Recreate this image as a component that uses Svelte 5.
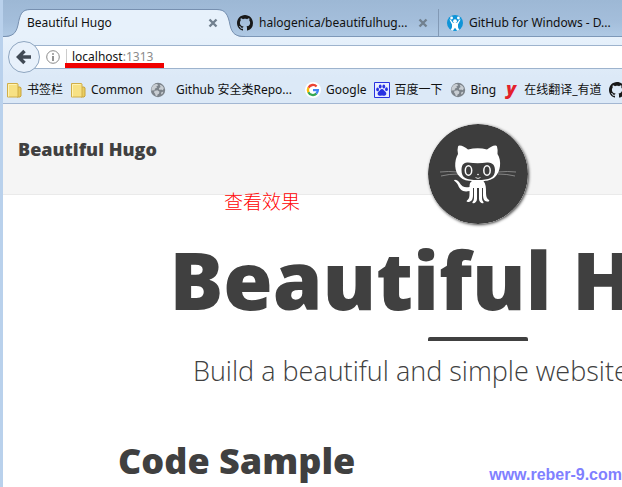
<script>
  const bookmarks = [
    { icon: 'folder', label: '书签栏' },
    { icon: 'folder', label: 'Common' },
    { icon: 'globe', label: 'Github 安全类Repo...', wide: true },
    { icon: 'google', label: 'Google' },
    { icon: 'baidu', label: '百度一下' },
    { icon: 'globe', label: 'Bing' },
    { icon: 'youdao', label: '在线翻译_有道' },
    { icon: 'github', label: '' }
  ];
  const tabs = [
    { icon: 'github', label: 'halogenica/beautifulhug...' },
    { icon: 'people', label: 'GitHub for Windows - D...' }
  ];
</script>

{#snippet icon(name)}
  {#if name === 'folder'}
    <svg class="icon" viewBox="0 0 16 16" aria-hidden="true">
      <path d="M11 5h3.2l.8 1v8l-1 1h-3z" fill="#e9cd60" stroke="#c9a43c" />
      <path d="M1.5 1.5h10l.5.5v13H1.5z" fill="#f7e184" stroke="#d0ae49" />
      <path d="M2.5 2.5h8M2.5 2.5v12" stroke="#fff3b5" fill="none" />
    </svg>
  {:else if name === 'globe'}
    <svg class="icon" viewBox="0 0 16 16" aria-hidden="true">
      <circle cx="8" cy="8" r="7.2" fill="#7c838a" />
      <path d="M2 5.2C3.2 3 5 1.8 7 2l1.3 1.2-2 1.2.7 1.4-2 .8-.5 2-1.8-.4L1.6 9C1.3 7.3 1.5 6.2 2 5.2zM9.5 2.5l2.8 1.2 1.6 2.3-1 2.2-1.8-.7-1.6.6-.6-1.9 1.700-1.100zM5 8.700l2.400-.5 2.100 1.600-.6 2-1.400.7-.3 1.700-1.600-.8L5 11.800 3.800 10zM11.500 10l1.800-.3-.8 2-1.600.9z" fill="#c9ced3" />
    </svg>
  {:else if name === 'google'}
    <svg class="icon" viewBox="0 0 16 16" aria-hidden="true">
      <circle cx="8" cy="8" r="8" fill="#fff" />
      <g fill="none" stroke-width="2.3">
        <path d="M3.5 5.7A5 5 0 0 1 11.6 4.5" stroke="#ea4335" />
        <path d="M3.5 5.6a5 5 0 0 0 0 4.8" stroke="#fbbc05" />
        <path d="M3.4 10.2a5 5 0 0 0 8 1.4" stroke="#34a853" />
        <path d="M8 8.1h4.9a5 5 0 0 1-1.6 3.6" stroke="#4285f4" />
      </g>
    </svg>
  {:else if name === 'baidu'}
    <svg class="icon" viewBox="0 0 16 16" aria-hidden="true">
      <path d="M.5.5h15v15H.5z" fill="#e9edff" stroke="#2932e1" />
      <g fill="#2932e1">
        <ellipse cx="3.6" cy="7.4" rx="1.4" ry="1.9" />
        <ellipse cx="6.2" cy="4.4" rx="1.4" ry="2" />
        <ellipse cx="9.8" cy="4.4" rx="1.4" ry="2" />
        <ellipse cx="12.5" cy="7.2" rx="1.4" ry="1.9" />
        <path d="M8 7c1.5 0 2 1.6 3.2 2.6 1.6 1.3 1.6 4-.8 4.1-1 0-1.5-.3-2.4-.3s-1.5.4-2.5.3c-2.3-.1-2.4-2.8-.8-4.1C6 8.600 6.400 7 8 7z" />
      </g>
    </svg>
  {:else if name === 'youdao'}
    <span class="icon youdao" aria-hidden="true">y</span>
  {:else if name === 'people'}
    <svg class="icon" viewBox="0 0 16 16" aria-hidden="true">
      <circle cx="8" cy="8" r="8" fill="#0e94d8" />
      <g fill="#fff">
        <circle cx="8" cy="6.200" r="1.900" />
        <circle cx="4.600" cy="3" r="1.400" />
        <circle cx="11.400" cy="3" r="1.400" />
        <path d="M2.400 4.600l1.200-.2 2.500 3.600h3.800l2.500-3.600 1.200.2L11 9.600v2.600l1.200 2.800-2 .7L8 12.700l-2.200 3-2-.7L5 12.200V9.600z" />
      </g>
    </svg>
  {:else}
    <svg class="icon" viewBox="0 0 16 16" aria-hidden="true">
      <path fill="#181818" d="M8 0C3.580 0 0 3.580 0 8c0 3.540 2.290 6.530 5.470 7.590.4.070.55-.17.55-.38 0-.19-.01-.82-.01-1.490-2.010.37-2.530-.49-2.690-.94-.09-.23-.48-.94-.82-1.130-.28-.15-.68-.52-.01-.53.63-.01 1.080.58 1.230.82.72 1.210 1.870.87 2.330.66.07-.52.28-.87.51-1.070-1.780-.2-3.640-.89-3.640-3.950 0-.87.31-1.590.82-2.150-.08-.2-.36-1.020.08-2.120 0 0 .67-.21 2.200.82.64-.18 1.320-.27 2-.27s1.360.09 2 .27c1.530-1.040 2.200-.82 2.200-.82.44 1.100.16 1.920.08 2.120.51.56.82 1.270.82 2.150 0 3.070-1.870 3.750-3.650 3.950.29.25.54.73.54 1.480 0 1.070-.01 1.930-.01 2.200 0 .21.15.46.55.38A8.010 8.010 0 0 0 16 8c0-4.420-3.580-8-8-8z" />
    </svg>
  {/if}
{/snippet}

{#snippet close()}
  <button class="close" aria-label="Close tab">
    <svg viewBox="0 0 10 10" aria-hidden="true"><path d="M1.500 1.500l7 7M8.500 1.500l-7 7" /></svg>
  </button>
{/snippet}

<div class="browser">
  <nav class="tabs" aria-label="Tabs">
    <div class="tab active">
      <svg class="shape" viewBox="0 0 242 29" aria-hidden="true">
        <path class="fill" d="M0 29V28C9 28 13 25 15 16C17 5 19 1 27 1H214C222 1 225 5 227 16C229 25 233 28 242 28V29z" />
        <path class="line" d="M0 27.500C9 27.500 13 25 15 16C17 5 19 .5 27 .5H214C222 .5 225 5 227 16C229 25 233 27.500 242 27.500" />
      </svg>
      <span class="title">Beautiful Hugo</span>
      {@render close()}
    </div>
    {#each tabs as tab}
      <div class="tab">
        {@render icon(tab.icon)}
        <span class="title">{tab.label}</span>
        {@render close()}
      </div>
    {/each}
  </nav>

  <div class="location">
    <button class="back" aria-label="Back">
      <svg viewBox="0 0 18 18" aria-hidden="true"><path d="M9.500 3L3.500 9l6 6M4 9h12" /></svg>
    </button>
    <div class="address">
      <svg class="info" viewBox="0 0 14 14" aria-hidden="true">
        <circle cx="7" cy="7" r="6.300" fill="none" stroke="#8b8b8b" />
        <path d="M7 6v5M7 3.200v1.600" stroke="#777" stroke-width="1.600" />
      </svg>
      <a class="url" href="http://localhost:1313">localhost<span>:1313</span></a>
    </div>
  </div>

  <nav class="bookmarks" aria-label="Bookmarks">
    {#each bookmarks as mark}
      <a href="#top" class:wide={mark.wide} aria-label={mark.label || 'GitHub'}>
        {@render icon(mark.icon)}
        {#if mark.label}<span>{mark.label}</span>{/if}
      </a>
    {/each}
  </nav>

  <div class="viewport">
    <div class="page" id="top">
      <header>
        <a class="brand" href="#top">Beautiful Hugo</a>
        <svg class="avatar" viewBox="0 0 100 100" role="img" aria-label="Octocat">
          <circle cx="50" cy="50" r="50" fill="#3d3d3d" />
          <path fill="none" stroke="#a5a5a5" stroke-width=".7" d="M12 48q8-1 18 0M13 52q8-2 17-2M88 48q-8-1-18 0M87 52q-8-2-17-2" />
          <path fill="#fff" d="M30 22.500C31 20 37 23 40 25.500Q50 23 59 25.500C63 22 68 20 69 22.500Q70 26 69.500 30C74 37 72.500 48 67 53C63 56.500 58 57 55.500 57C58 60 58 64 58 68C58 73 59 75 61 76C62 77 60.500 78 59 77.500C55.500 77 55 74 55 70V64H54V74C54 77 56 78 55.500 79C54 80 51 78 51 75V64H49V75C49 78 46 80 44.500 79C44 78 46 77 46 74V64H45V71C45 76 43 78 40 78C38.500 78 38 77 39.500 76C41 75 41.500 73 41.500 70V67C35 68.500 32 66 30 61C29 58.500 27 57.500 26 56.500C26 55 29 55.500 31 58C34 63 37 64 41.500 63C41.500 60 42 58 44 57C40 57 35 56 32 53C26 48 26 37 30 30Q29 26 30 22.500z" />
          <path fill="#3d3d3d" d="M40 38.500Q50 40 59 38.500C65 38 67 42 67 46C67 54 61 56 50 56C38 56 33.500 54 33.500 46C33.500 42 35 38 40 38.500z" />
          <g fill="#3d3d3d" stroke="#fff" stroke-width="1.500">
            <ellipse cx="40.500" cy="46.500" rx="3.200" ry="4.700" />
            <ellipse cx="59" cy="46.500" rx="3.200" ry="4.700" />
          </g>
          <circle cx="50" cy="50.500" r=".8" fill="#fff" />
          <path d="M47.500 53.500Q50 55.500 52.500 53.500" fill="none" stroke="#fff" stroke-width=".8" />
        </svg>
      </header>
      <main>
        <h1>Beautiful Hugo</h1>
        <hr />
        <p class="subtitle">Build a beautiful and simple website</p>
        <article><h2>Code Sample</h2></article>
      </main>
    </div>
  </div>

  <span class="underline"></span>
  <span class="note">查看效果</span>
  <span class="watermark">www.reber-9.com</span>
</div>

<style>
  :global(body) { margin: 0; }
  .browser {
    position: relative;
    display: flex;
    flex-direction: column;
    min-height: 100vh;
    box-sizing: border-box;
    border-left: 3px solid #b9d1ec;
    overflow: hidden;
    background: #fff;
    font: 12px/18px "Noto Sans", "Noto Sans CJK SC", sans-serif;
    color: #111;
  }
  a { color: inherit; text-decoration: none; }
  button { padding: 0; border: 0; background: none; }
  .icon { display: block; flex: none; width: 16px; height: 16px; }
  .tabs {
    display: flex;
    height: 37px;
    box-sizing: border-box;
    padding-top: 9px;
    background: linear-gradient(#9db8d5, #a4bedb 60%, #afc9e4);
    border-bottom: 1px solid #7d98b8;
  }
  .tab {
    position: relative;
    display: flex;
    align-items: center;
    flex: none;
    width: 210px;
    height: 28px;
    box-sizing: border-box;
    padding: 0 10px 0 8px;
    border-right: 1px solid #8299b5;
    white-space: nowrap;
  }
  .tab.active { width: 226px; padding: 0 11px 0 24px; border: 0; }
  .tab .icon { margin-right: 6px; }
  .title { position: relative; flex: 1; }
  .shape { position: absolute; left: 0; top: 0; width: 242px; height: 29px; }
  .fill { fill: #e7f1fb; }
  .line { fill: none; stroke: #7790b0; }
  .close { position: relative; width: 10px; height: 10px; }
  .close svg { display: block; }
  .close path { stroke: #71808f; stroke-width: 2.400; }
  .location {
    display: flex;
    align-items: center;
    height: 40px;
    padding-left: 5px;
    background: linear-gradient(#e7f1fb, #dce9f7);
  }
  .back {
    position: relative;
    flex: none;
    display: grid;
    place-items: center;
    width: 32px;
    height: 32px;
    box-sizing: border-box;
    border: 1px solid #8fa6c0;
    border-radius: 50%;
    background: #e8f1fb;
  }
  .back svg { width: 18px; height: 18px; }
  .back path { fill: none; stroke: #414a55; stroke-width: 3.500; }
  .address {
    display: flex;
    align-items: center;
    flex: 1;
    height: 24px;
    box-sizing: border-box;
    margin-left: -6px;
    padding-left: 12px;
    border: solid #9db3cd;
    border-width: 1px 0;
    background: #fff;
  }
  .info { width: 14px; height: 14px; }
  .url { margin-left: 6px; padding-left: 5px; border-left: 1px solid #ccc; line-height: 16px; }
  .url span { color: #8a8a8a; }
  .bookmarks {
    display: flex;
    align-items: center;
    gap: 7px;
    height: 27px;
    box-sizing: border-box;
    padding-left: 3px;
    border-bottom: 1px solid #a3b7d2;
    background: #dce9f7;
    white-space: nowrap;
  }
  .bookmarks a { display: flex; flex: none; align-items: center; gap: 5px; }
  .bookmarks .wide { gap: 10px; margin-right: 6px; }
  .youdao {
    color: #e3212b;
    font: italic 900 18px/12px "Open Sans", sans-serif;
    text-align: center;
  }
  .viewport { flex: 1; overflow: hidden; }
  .page { width: 950px; color: #404040; font-family: "Open Sans", sans-serif; }
  header {
    position: relative;
    display: flex;
    align-items: center;
    height: 91px;
    box-sizing: border-box;
    padding-left: 15px;
    border-bottom: 1px solid #eaeaea;
    background: #f5f5f5;
  }
  .brand { font-size: 18px; line-height: 20px; font-weight: 800; }
  .avatar {
    position: absolute;
    top: 20px;
    left: 50%;
    width: 100px;
    height: 100px;
    margin-left: -50px;
    border-radius: 50%;
    box-shadow: 1px 1px 3px 0 #444;
  }
  main { padding-top: 40px; text-align: center; }
  h1 { margin: 0; font-size: 80px; line-height: 88px; font-weight: 800; }
  hr { width: 100px; height: 4px; margin: 14px auto; border: 0; border-radius: 2px 2px 0 0; background: #404040; }
  .subtitle { width: 570px; margin: 0 auto; font-size: 27px; line-height: 32px; font-weight: 300; text-align: left; }
  article { width: 720px; margin: 54px auto 0; text-align: left; }
  h2 { margin: 0; font-size: 36px; line-height: 40px; font-weight: 800; }
  .underline { position: absolute; left: 62px; top: 63px; width: 99px; height: 5px; background: #f00000; }
  .note {
    position: absolute;
    left: 221px;
    top: 189px;
    color: #f00;
    font: 300 19px/24px "Noto Sans CJK SC", sans-serif;
  }
  .watermark {
    position: absolute;
    right: 0;
    bottom: 3px;
    color: #8080ff;
    font: bold 16px/18px "Liberation Sans", Arial, sans-serif;
  }
</style>
